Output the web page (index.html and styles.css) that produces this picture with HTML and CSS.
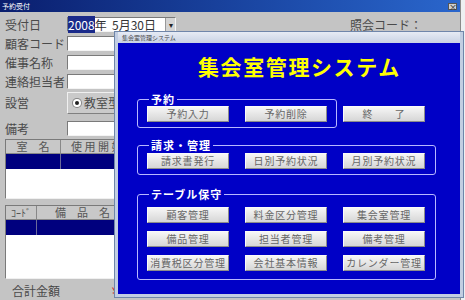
FILE: index.html
```html
<!DOCTYPE html>
<html lang="ja">
<head>
    <meta charset="UTF-8">
    <title>予約受付</title>
<link rel="stylesheet" href="styles.css">
</head>
<body>
    <div class="window">
        <div class="titlebar">
            <span class="title-text">予約受付</span>
            <span class="close-btn">×</span>
        </div>
        <div class="form">
            <div class="row">
                <span class="label">受付日</span>
                <div class="combo">
                    <span class="combo-text"><span class="sel">2008</span>年&nbsp;&nbsp;5月30日</span>
                    <span class="combo-arrow">▾</span>
                </div>
                <span class="lookup">照会コード：</span>
            </div>
            <div class="row">
                <span class="label">顧客コード</span>
                <div class="input"></div>
            </div>
            <div class="row">
                <span class="label">催事名称</span>
                <div class="input"></div>
            </div>
            <div class="row">
                <span class="label">連絡担当者</span>
                <div class="input"></div>
            </div>
            <div class="row row-tall">
                <span class="label">設営</span>
                <div class="radio-box">
                    <span class="radio"></span>
                    <span>教室型</span>
                </div>
            </div>
            <div class="row row-note">
                <span class="label">備考</span>
                <div class="input"></div>
            </div>

            <div class="list list-rooms">
                <div class="list-head">
                    <span class="col col-room">室　名</span>
                    <span class="col col-wide">使 用 開 始</span>
                </div>
                <div class="list-sel">
                    <span class="col col-room"></span>
                    <span class="col col-wide"></span>
                </div>
            </div>

            <div class="list list-items">
                <div class="list-head">
                    <span class="col col-code">ｺｰﾄﾞ</span>
                    <span class="col col-wide">備　品　名　称</span>
                </div>
                <div class="list-sel">
                    <span class="col col-code"></span>
                    <span class="col col-wide"></span>
                </div>
            </div>

            <div class="total">
                <span class="label">合計金額</span>
                <span class="yen">￥</span>
            </div>
        </div>
    </div>

    <!-- menu dialog lies over the booking window -->
    <div class="dialog">
        <div class="dialog-titlebar">集会室管理システム</div>
        <div class="dialog-body">
            <div class="big-title">集会室管理システム</div>

            <div class="group-line">
                <fieldset class="group group-small">
                    <legend>予約</legend>
                    <div class="btn-row">
                        <button class="menu-btn">予約入力</button>
                        <button class="menu-btn">予約削除</button>
                    </div>
                </fieldset>
                <button class="menu-btn btn-exit">終　　了</button>
            </div>

            <fieldset class="group group-billing">
                <legend>請求・管理</legend>
                <div class="btn-row">
                    <button class="menu-btn">請求書発行</button>
                    <button class="menu-btn">日別予約状況</button>
                    <button class="menu-btn">月別予約状況</button>
                </div>
            </fieldset>

            <fieldset class="group group-tables">
                <legend>テーブル保守</legend>
                <div class="btn-grid">
                    <button class="menu-btn">顧客管理</button>
                    <button class="menu-btn">料金区分管理</button>
                    <button class="menu-btn">集会室管理</button>
                    <button class="menu-btn">備品管理</button>
                    <button class="menu-btn">担当者管理</button>
                    <button class="menu-btn">備考管理</button>
                    <button class="menu-btn">消費税区分管理</button>
                    <button class="menu-btn">会社基本情報</button>
                    <button class="menu-btn">カレンダー管理</button>
                </div>
            </fieldset>
        </div>
    </div>
</body>
</html>
```

FILE: styles.css
```css
/* booking window + menu dialog */

body {
    margin: 0;
    background-color: #eef0f2;
    font-family: "Noto Sans CJK JP", sans-serif;
    width: 465px;
    height: 300px;
    overflow: hidden;
    position: relative;
}

.window {
    width: 460px;
    height: 300px;
    background-color: #c4c4c4;
    border-right: 1px solid #8a8a8a;
}

.titlebar {
    height: 12px;
    background: linear-gradient(to right, #0a1e6e, #1c4aa8 60%, #2a66cc);
    display: flex;
    align-items: center;
    justify-content: space-between;
    padding: 0 2px;
}

.title-text {
    color: #fff;
    font-size: 7px;
    line-height: 10px;
}

.close-btn {
    width: 9px;
    height: 7px;
    background-color: #d0d0d0;
    border: 1px solid #555;
    color: #222;
    font-size: 8px;
    line-height: 6px;
    text-align: center;
    box-sizing: border-box;
    margin-right: 1px;
}

.form {
    padding: 3px 0 0 5px;
}

.row {
    display: flex;
    align-items: center;
    height: 19px;
}

.row-tall {
    height: 23px;
}

.row-note {
    margin-top: 5px;
}

.label {
    width: 62px;
    font-size: 12px;
    color: #4a4a4a;
    line-height: 14px;
}

.input {
    width: 130px;
    height: 15px;
    background-color: #fff;
    border: 1px solid;
    border-color: #7a7a7a #f4f4f4 #f4f4f4 #7a7a7a;
    box-sizing: border-box;
}

.combo {
    width: 109px;
    height: 15px;
    background-color: #fff;
    border: 1px solid;
    border-color: #7a7a7a #f4f4f4 #f4f4f4 #7a7a7a;
    box-sizing: border-box;
    display: flex;
    justify-content: space-between;
}

.combo-text {
    font-size: 12px;
    line-height: 13px;
    color: #333;
}

.sel {
    background-color: #1a2a8a;
    color: #fff;
}

.combo-arrow {
    width: 9px;
    background-color: #d4d4d4;
    border-left: 1px solid #999;
    font-size: 8px;
    line-height: 13px;
    text-align: center;
    color: #222;
}

.lookup {
    margin-left: 174px;
    font-size: 12px;
    color: #4a4a4a;
}

.radio-box {
    width: 130px;
    height: 22px;
    box-sizing: border-box;
    border: 1px solid;
    border-color: #f0f0f0 #808080 #808080 #f0f0f0;
    background-color: #cacaca;
    display: flex;
    align-items: center;
    gap: 5px;
    padding-left: 7px;
    font-size: 12px;
    color: #4a4a4a;
}

.radio {
    width: 4px;
    height: 4px;
    border-radius: 50%;
    background-color: #222;
    box-shadow: 0 0 0 2px #fff, 0 0 0 3px #888;
}

.list {
    width: 130px;
    background-color: #fff;
    border: 1px solid;
    border-color: #7a7a7a #f0f0f0 #f0f0f0 #7a7a7a;
    box-sizing: border-box;
}

.list-rooms {
    margin-top: 1px;
    height: 60px;
}

.list-items {
    margin-top: 6px;
    height: 74px;
}

.list-head, .list-sel {
    display: flex;
}

.list-head {
    height: 13px;
    background-color: #c8c8c8;
    border-bottom: 1px solid #888;
    font-size: 11px;
    line-height: 13px;
    color: #555;
}

.list-sel {
    height: 15px;
    background-color: #00007e;
}

.col {
    border-right: 1px solid #888;
    text-align: center;
    white-space: nowrap;
}

.col-room {
    width: 54px;
}

.col-code {
    width: 30px;
    font-size: 10px;
}

.col-wide {
    flex: 1;
    text-align: left;
    padding-left: 10px;
}

.list-sel .col {
    border-right-color: #6a6a9a;
}

.list-items .col-wide {
    padding-left: 18px;
}

.total {
    display: flex;
    align-items: center;
    margin-top: 4px;
    height: 16px;
    padding-left: 7px;
}

.total .label {
    width: 98px;
}

.yen {
    color: #d02020;
    font-size: 11px;
}

/* dialog */

.dialog {
    position: absolute;
    left: 114px;
    top: 31px;
    width: 350px;
    height: 267px;
    box-sizing: border-box;
    border: 1px solid #6f86aa;
    background-color: #c2cee2;
    padding: 0 3px 3px 3px;
    display: flex;
    flex-direction: column;
}

.dialog-titlebar {
    height: 11px;
    font-size: 6px;
    line-height: 11px;
    color: #444;
    padding-left: 4px;
    background: linear-gradient(to bottom, #e6ebf4, #c8d2e4);
}

.dialog-body {
    flex: 1;
    background-color: #0000c6;
    padding-left: 19px;
}

.big-title {
    margin: 11px 0 0 61px;
    font-size: 21px;
    line-height: 24px;
    font-weight: bold;
    letter-spacing: 1.6px;
    color: #ffff00;
}

.group-line {
    display: flex;
    align-items: flex-start;
    margin-top: 14px;
}

.group {
    margin: 0;
    border: 1px solid #b8b8ff;
    border-radius: 3px;
    padding: 0 8px 5px 9px;
}

.group legend {
    color: #fff;
    font-size: 11px;
    font-weight: bold;
    line-height: 14px;
    padding: 0 2px;
    margin-left: 2px;
    letter-spacing: 1px;
}

.group-small {
    width: 200px;
    box-sizing: border-box;
}

.group-billing, .group-tables {
    width: 299px;
    box-sizing: border-box;
}

.group-billing {
    margin-top: 10px;
    padding-top: 1px;
}

.group-tables {
    margin-top: 12px;
    padding-top: 6px;
    padding-bottom: 8px;
}

.btn-row {
    display: flex;
    gap: 16px;
}

.btn-grid {
    display: grid;
    grid-template-columns: repeat(3, 82px);
    column-gap: 16px;
    row-gap: 8px;
}

.menu-btn {
    width: 82px;
    height: 16px;
    padding: 0;
    box-sizing: border-box;
    border: 1px solid;
    border-color: #fafafa #8c8c8c #8c8c8c #fafafa;
    background: linear-gradient(to bottom, #f6f6f6, #d6d6d6);
    font-family: "Noto Sans CJK JP", sans-serif;
    font-size: 10px;
    line-height: 14px;
    letter-spacing: 0.8px;
    color: #666;
    white-space: nowrap;
}

.btn-exit {
    margin: 14px 0 0 6px;
}
```
